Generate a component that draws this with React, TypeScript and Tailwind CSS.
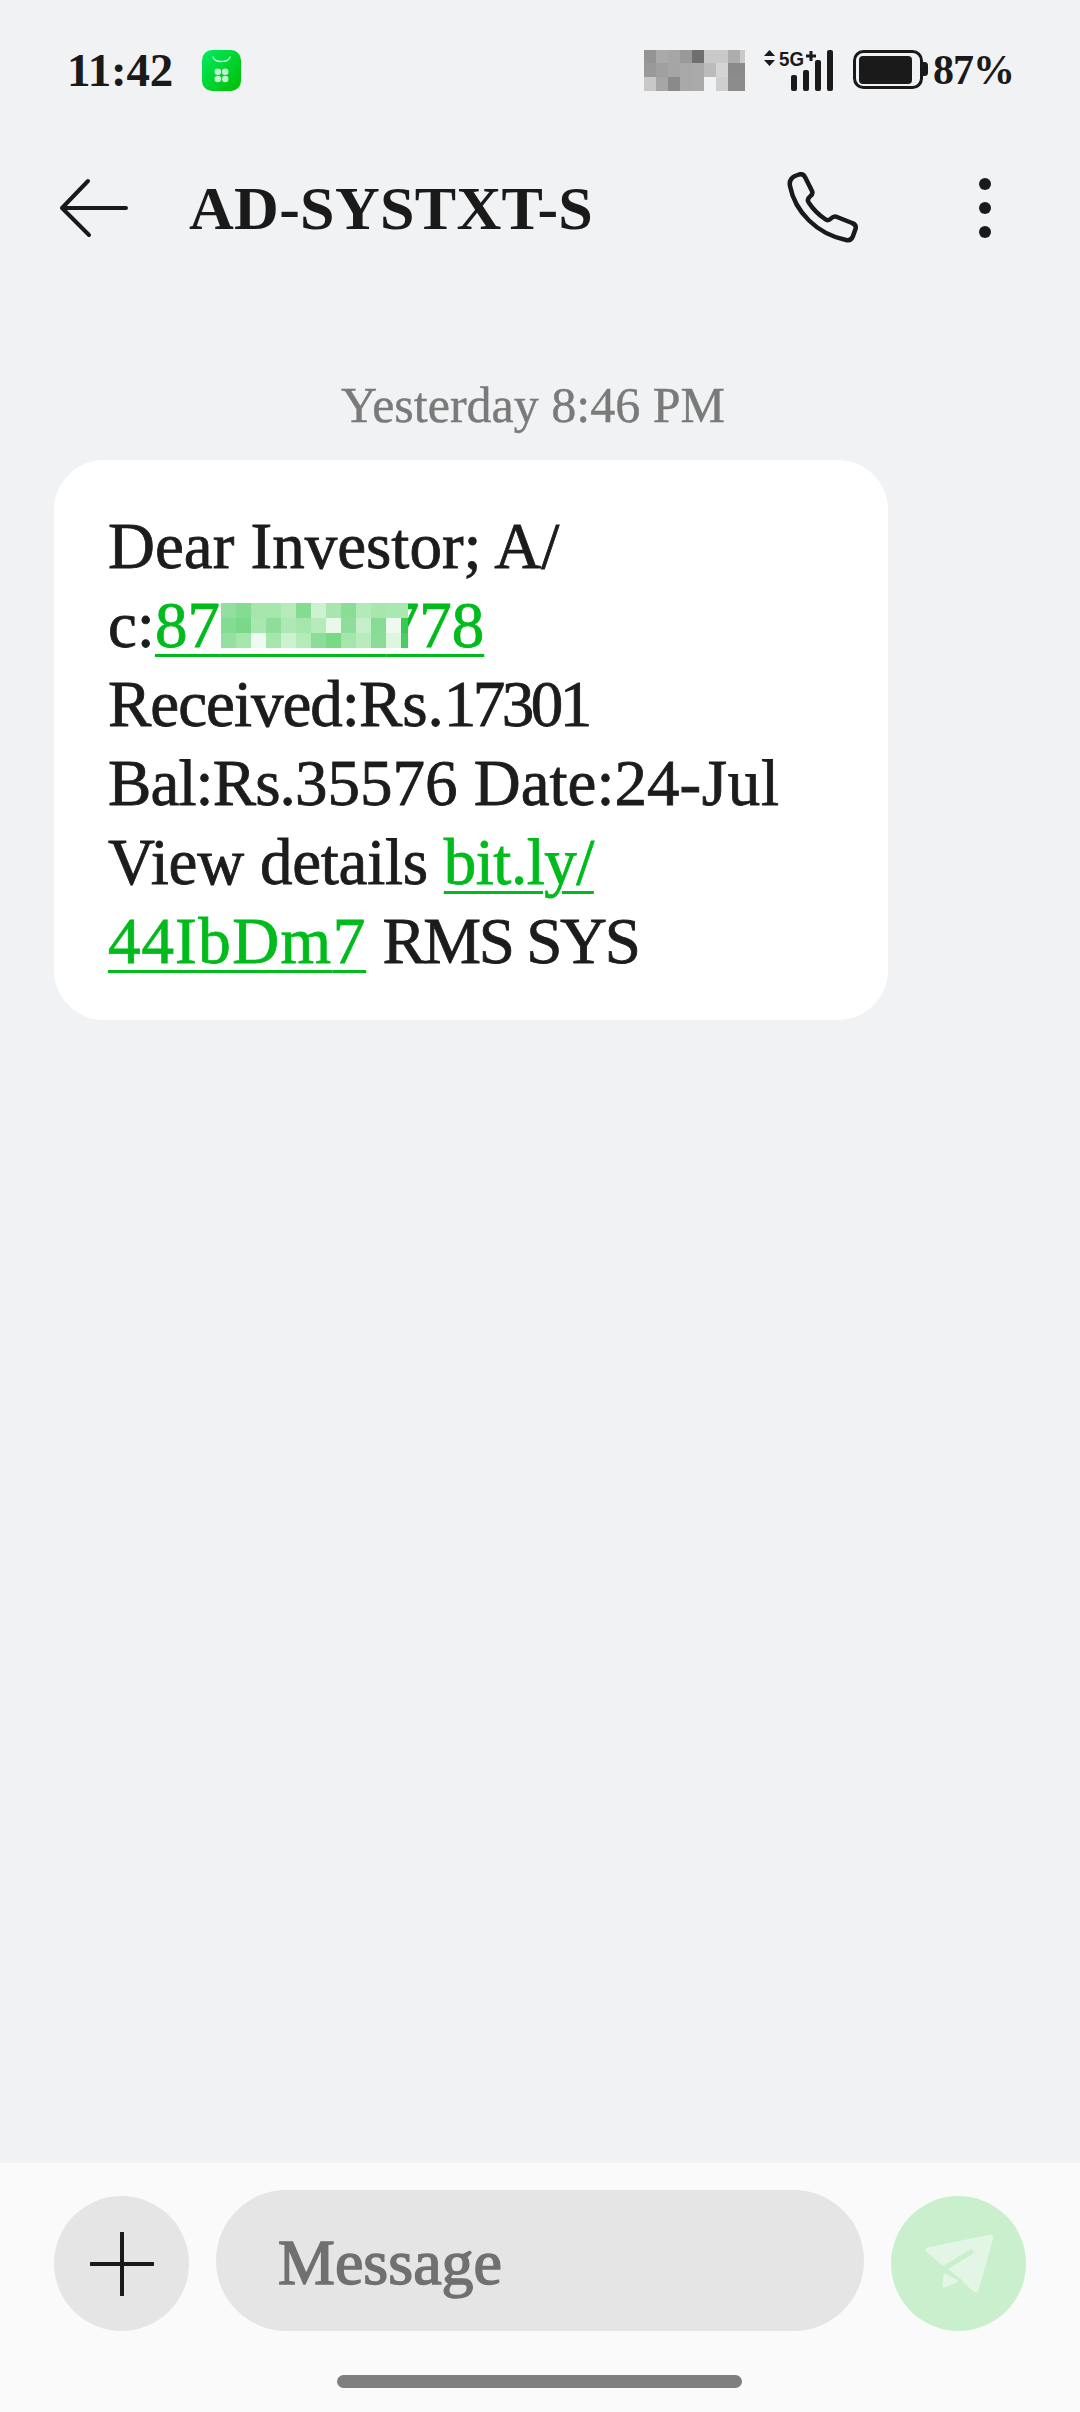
const serif = "font-['Liberation_Serif','Times_New_Roman',serif]";

const statusPixels = [
  "#949494", "#aaaaaa", "#a6a6a6", "#999999", "#6f6f6f", "#c9c9c9", "#c9c9c9", "#adadad", "#c9c9c9",
  "#999999", "#a0a0a0", "#a5a5a5", "#a8a8a8", "#aaaaaa", "#bbbbbb", "#d4d4d4", "#8a8a8a", "#8a8a8a",
  "#c8c8c8", "#a6a6a6", "#8a8a8a", "#a8a8a8", "#aaaaaa", "#f1f2f4", "#cfcfcf", "#8c8c8c", "#8c8c8c",
];

const maskPixels = [
  "#93df9f", "#84dc93", "#a5e6ad", "#a5e6ad", "#b6eabb", "#85db92", "#cdf2d0", "#a7e6ae", "#8add97", "#b3ebb8", "#a7e6ad", "#a9e8b0", "#a9e8b0",
  "#84dc93", "#79d988", "#a8e7b0", "#8edd9a", "#aee8b4", "#a5e6ad", "#b7eabb", "#e8f9ea", "#8edd9a", "#c4efc8", "#86dc94", "#eefaf0", "#3cc755",
  "#94e0a0", "#a5e6ad", "#effaf0", "#a5e6ad", "#ccf2d0", "#b5eabb", "#8bdd98", "#7ad887", "#a5e6ad", "#b8ecbd", "#8adc97", "#dcf6df", "#4ccb63",
];

function StoreIcon() {
  return (
    <svg width="39" height="41" viewBox="0 0 39 41" className="ml-[29px]">
      <defs>
        <linearGradient id="store" x1="0" y1="0" x2="1" y2="1">
          <stop offset="0" stopColor="#00ec62" />
          <stop offset="1" stopColor="#00bd00" />
        </linearGradient>
      </defs>
      <rect width="39" height="41" rx="10" fill="url(#store)" />
      <path d="M11 7c1.500 6 15.500 6 17 0" fill="none" stroke="#c8f7d6" strokeWidth="1.300" strokeLinecap="round" />
      <g fill="#bff5cf">
        <circle cx="15.800" cy="21.800" r="3.300" />
        <circle cx="23.200" cy="21.800" r="3.300" />
        <circle cx="15.800" cy="29" r="3.300" />
        <circle cx="23.200" cy="29" r="3.300" />
      </g>
    </svg>
  );
}

function SignalIcon() {
  return (
    <svg width="70" height="48" viewBox="0 -6 70 48" className="mt-[-6px] overflow-visible">
      <path d="M5.500 0l5.500 6h-11zM5.500 16l5.500-6h-11z" fill="#1a1a1a" transform="translate(0 1)" />
      <text x="15" y="17" fontFamily="'Liberation Sans', sans-serif" fontWeight="700" fontSize="21" fill="#1a1a1a" textLength="25" lengthAdjust="spacingAndGlyphs">5G</text>
      <path d="M47 2v10M42 7h10" stroke="#1a1a1a" strokeWidth="3" />
      <rect x="27" y="26" width="6" height="16" rx="2" fill="#1a1a1a" />
      <rect x="39" y="21" width="6" height="21" rx="2" fill="#1a1a1a" />
      <rect x="51" y="11" width="6" height="31" rx="2" fill="#1a1a1a" />
      <rect x="63" y="1" width="6" height="41" rx="2" fill="#1a1a1a" />
    </svg>
  );
}

function BatteryIcon() {
  return (
    <svg width="75" height="40" viewBox="0 0 75 40" className="ml-[19px]">
      <rect x="1.500" y="1.500" width="67" height="36" rx="9" fill="none" stroke="#1a1a1a" strokeWidth="3" />
      <rect x="6" y="6" width="53" height="28" rx="4" fill="#1a1a1a" />
      <path d="M70 12h1.500a3.500 3.500 0 0 1 3.500 3.500v7a3.500 3.500 0 0 1-3.500 3.500H70z" fill="#1a1a1a" />
    </svg>
  );
}

function StatusBar() {
  return (
    <div className="flex h-[140px] items-center pr-[66px] pl-[67px] text-[#1a1a1a]">
      <span className={`${serif} text-[47px] leading-none font-bold tracking-[-0.2px]`}>11:42</span>
      <StoreIcon />
      <div className="ml-auto flex items-center">
        <div className="grid h-[41px] w-[101px] grid-cols-[repeat(8,12px)_5px] grid-rows-3">
          {statusPixels.map((c, i) => <div key={i} style={{ backgroundColor: c }} />)}
        </div>
        <div className="ml-[19px]"><SignalIcon /></div>
        <BatteryIcon />
        <span className={`${serif} ml-[5px] text-[42px] leading-none font-bold tracking-[-1px]`}>87%</span>
      </div>
    </div>
  );
}

function Header() {
  return (
    <div className="flex h-[136px] items-center text-[#1a1a1a]">
      <svg width="72" height="62" viewBox="0 0 72 62" className="ml-[58px]">
        <path d="M4 31h64M30 4L4 31l27 27" fill="none" stroke="#1a1a1a" strokeWidth="4" strokeLinecap="round" strokeLinejoin="round" />
      </svg>
      <h1 className={`${serif} ml-[59px] text-[62px] leading-none font-bold tracking-[0.3px]`}>AD-SYSTXT-S</h1>
      <svg width="73" height="72" viewBox="0 0 73 72" className="ml-auto">
        <path d="M3 14C2 9 4 6 8 4L12 2.500C15 1.500 17 3 18 5L25 19C26 21 25 23 23 24.500C20.500 26.500 20.500 29 22 31C26 37 32 43 38 47C40.500 49 42 48.500 44 46.500C46 44.500 48 44 50 45L65 51C68 52 69.500 54 68.500 57L66 64C65 67 63 69 59 68C30 62 8 40 3 14Z" fill="none" stroke="#1a1a1a" strokeWidth="4.500" strokeLinejoin="round" />
      </svg>
      <div className="mr-[89px] ml-[119px] flex flex-col gap-[12px]">
        <div className="size-[12px] rounded-full bg-[#1a1a1a]" />
        <div className="size-[12px] rounded-full bg-[#1a1a1a]" />
        <div className="size-[12px] rounded-full bg-[#1a1a1a]" />
      </div>
    </div>
  );
}

function Link({ children }: { children: React.ReactNode }) {
  return <span className="text-[#00bb1c] underline decoration-[3px] underline-offset-[7px]">{children}</span>;
}

function Bubble() {
  return (
    <div className={`${serif} ml-[54px] w-[834px] rounded-[50px] bg-white pt-[47px] pb-[39px] pl-[54px] text-[65px] leading-[79px] text-[#1c1c1c] [-webkit-text-stroke:0.8px]`}>
      Dear Investor; A/<br />
      c:<Link>87<span className="relative tracking-[-4.7px]">000000<span className="absolute top-[14px] left-[1px] grid h-[45px] w-[187px] grid-cols-[repeat(12,15px)_7px] grid-rows-3">
        {maskPixels.map((c, i) => <span key={i} style={{ backgroundColor: c }} />)}
      </span></span>778</Link><br />
      <span className="tracking-[-1px]">Received:</span>Rs.<span className="tracking-[-3.5px]">17301</span><br />
      <span className="tracking-[-0.9px]">Bal:Rs.</span>35576 Date:24<span className="tracking-[0.7px]">-Jul</span><br />
      <span className="tracking-[-0.25px]">View details </span><span className="tracking-[-0.5px]"><Link>bit.ly/</Link></span><br />
      <Link><span className="tracking-[1px]">44</span><span className="tracking-[1.5px]">IbDm</span><span className="tracking-[1px]">7</span></Link> <span className="tracking-[-2.4px]">RMS SYS</span>
    </div>
  );
}

function Composer() {
  return (
    <div className="flex h-[249px] flex-col bg-[#fafafa]">
      <div className="flex h-[168px] items-end pl-[54px]">
        <button className="flex size-[135px] items-center justify-center rounded-full bg-[#e5e5e5]">
          <svg width="64" height="64" viewBox="0 0 64 64">
            <path d="M32 1v62M1 32h62" stroke="#1a1a1a" strokeWidth="4" strokeLinecap="round" />
          </svg>
        </button>
        <div className={`${serif} ml-[27px] flex h-[141px] w-[648px] items-center rounded-full bg-[#e5e5e5] pt-[4px] pl-[62px] text-[64px] text-[#707070] [-webkit-text-stroke:1.5px]`}>
          Message
        </div>
        <button className="ml-[27px] size-[135px] rounded-full bg-[#c9efcd]">
          <svg width="135" height="135" viewBox="0 0 135 135">
            <path d="M37 54L100 41 85 94Z" fill="#e3f6e6" stroke="#e3f6e6" strokeWidth="5" strokeLinejoin="round" />
            <path d="M54 79L53 90 65 85Z" fill="#e3f6e6" stroke="#e3f6e6" strokeWidth="3" strokeLinejoin="round" />
            <path d="M80 56L54 72" stroke="#c9efcd" strokeWidth="5" strokeLinecap="round" />
            <path d="M53 71L72 86" stroke="#c9efcd" strokeWidth="2" />
          </svg>
        </button>
      </div>
      <div className="mt-[44px] ml-[337px] h-[13px] w-[405px] rounded-full bg-[#7f7f7f]" />
    </div>
  );
}

export default function App() {
  return (
    <div className="flex h-[2412px] w-[1080px] flex-col bg-[#f1f2f4]">
      <StatusBar />
      <Header />
      <div className={`${serif} mt-[99px] mb-[25px] h-[60px] pr-[14px] text-center text-[50px] leading-[60px] text-[#7a7a7a] [-webkit-text-stroke:0.4px]`}>
        Yesterday 8:46 PM
      </div>
      <Bubble />
      <div className="flex-1" />
      <Composer />
    </div>
  );
}
